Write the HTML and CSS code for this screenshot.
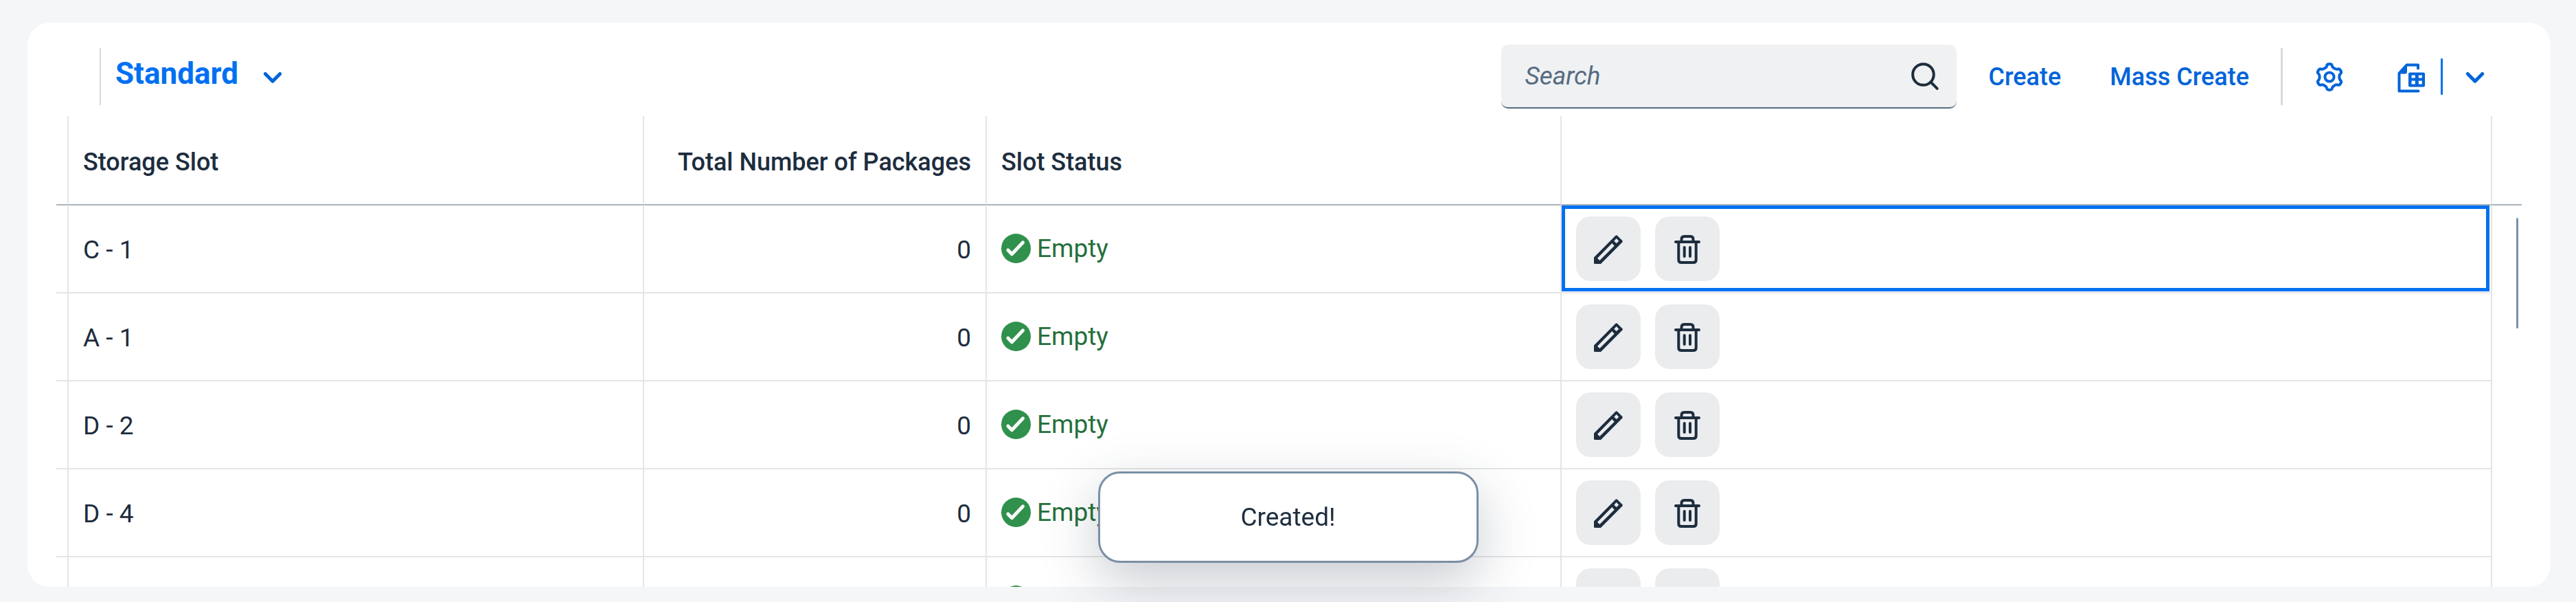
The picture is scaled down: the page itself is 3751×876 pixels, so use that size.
FILE: index.html
```html
<!DOCTYPE html>
<html lang="en">
<head>
<meta charset="utf-8">
<title>Storage Slots</title>
<link rel="stylesheet" href="styles.css">
</head>
<body>
<svg class="sprite" aria-hidden="true">
  <symbol id="chevron" viewBox="0 0 48 48"><path class="line thick" d="M13.3 19.5 24 30.2 34.7 19.5"/></symbol>
  <symbol id="search" viewBox="0 0 48 48"><circle class="line" cx="21.5" cy="21.5" r="15.3"/><path class="line" d="m32.5 32.5 9.3 9.3"/></symbol>
  <symbol id="export" viewBox="0 0 48 48">
    <path class="line" d="M38 11.5V6.5H21.5L10.5 18.5V44.5H38.5"/>
    <path d="M10 18 22 6V16.5Q22 19.5 19 19.5H10Z"/>
    <path fill-rule="evenodd" d="M26 17.5H46Q48 17.5 48 19.5V36.5Q48 38.5 46 38.5H26Q24 38.5 24 36.5V19.5Q24 17.5 26 17.5ZM28.5 21.5V25.5H33.8V21.5ZM38.8 21.5V25.5H43.8V21.5ZM28.5 29.5V34.5H33.8V29.5ZM38.8 29.5V34.5H43.8V29.5Z"/>
  </symbol>
  <symbol id="edit" viewBox="0 0 48 48">
    <path fill-rule="evenodd" d="M3 36.5 34.5 4.7Q35.7 3.6 36.9 4.7L44.3 12Q45.5 13.2 44.3 14.4L13 46H4.5Q3 46 3 44.5ZM8 37.7 11.3 41 32.7 19.7 29.3 16ZM35.7 9 32.3 12.7 35.7 16 39.3 12.7Z"/>
  </symbol>
  <symbol id="delete" viewBox="0 0 48 48">
    <path class="line" d="M7 14H41M15.5 14V10Q15.5 6 19.5 6H28.5Q32.5 6 32.5 10V14M11.3 14V40Q11.3 44 15.3 44H32.7Q36.7 44 36.7 40V14M19.7 22V35M28 22V35"/>
  </symbol>
  <symbol id="success" viewBox="0 0 43 43"><circle cx="21.5" cy="21.5" r="21.5"/><path class="tick" d="M9.8 24 15.4 29.7 31.4 12.9"/></symbol>
</svg>

<main class="card">
  <div class="toolbar">
    <span class="separator separator-thin"></span>
    <h2 class="view-title">Standard</h2>
    <button class="view-menu" type="button" aria-label="Select view"><svg class="icon"><use href="#chevron"/></svg></button>
    <div class="actions">
      <div class="search">
        <input class="search-input" type="text" placeholder="Search" aria-label="Search">
        <button class="search-button" type="button" aria-label="Run search"><svg class="icon"><use href="#search"/></svg></button>
      </div>
      <button class="text-button" type="button">Create</button>
      <button class="text-button" type="button">Mass Create</button>
      <span class="separator"></span>
      <button class="icon-button" type="button" aria-label="Settings">
        <svg class="icon" viewBox="-24 -24 48 48">
          <circle class="line" r="6.6"/>
          <g id="gear-part"><path class="line" d="M0-18.7H1Q3.4-18.7 3.7-16.8C4-13.5 9.7-10.2 12.7-11.6Q14.5-12.3 15.7-10.2L16.2-9.4"/></g>
          <use href="#gear-part" transform="rotate(60)"/>
          <use href="#gear-part" transform="rotate(120)"/>
          <use href="#gear-part" transform="rotate(180)"/>
          <use href="#gear-part" transform="rotate(240)"/>
          <use href="#gear-part" transform="rotate(300)"/>
        </svg>
      </button>
      <div class="split">
        <button class="icon-button" type="button" aria-label="Export"><svg class="icon"><use href="#export"/></svg></button>
        <span class="split-line"></span>
        <button class="icon-button" type="button" aria-label="Export options"><svg class="icon"><use href="#chevron"/></svg></button>
      </div>
    </div>
  </div>

  <table class="slots">
    <colgroup><col class="col-gutter"><col class="col-slot"><col class="col-count"><col class="col-status"><col><col class="col-scroll"></colgroup>
    <thead>
      <tr><th></th><th>Storage Slot</th><th class="number">Total Number of Packages</th><th>Slot Status</th><th></th><th></th></tr>
    </thead>
    <tbody>
      <tr>
        <td></td><td>C - 1</td><td class="number">0</td>
        <td><span class="status"><svg class="status-icon"><use href="#success"/></svg>Empty</span></td>
        <td class="tools focused"><div class="row-actions"><button class="row-button" type="button" aria-label="Edit"><svg class="icon"><use href="#edit"/></svg></button><button class="row-button" type="button" aria-label="Delete"><svg class="icon"><use href="#delete"/></svg></button></div></td>
        <td class="scroll" rowspan="5"><div class="thumb"></div></td>
      </tr>
      <tr>
        <td></td><td>A - 1</td><td class="number">0</td>
        <td><span class="status"><svg class="status-icon"><use href="#success"/></svg>Empty</span></td>
        <td class="tools"><div class="row-actions"><button class="row-button" type="button" aria-label="Edit"><svg class="icon"><use href="#edit"/></svg></button><button class="row-button" type="button" aria-label="Delete"><svg class="icon"><use href="#delete"/></svg></button></div></td>
      </tr>
      <tr>
        <td></td><td>D - 2</td><td class="number">0</td>
        <td><span class="status"><svg class="status-icon"><use href="#success"/></svg>Empty</span></td>
        <td class="tools"><div class="row-actions"><button class="row-button" type="button" aria-label="Edit"><svg class="icon"><use href="#edit"/></svg></button><button class="row-button" type="button" aria-label="Delete"><svg class="icon"><use href="#delete"/></svg></button></div></td>
      </tr>
      <tr>
        <td></td><td>D - 4</td><td class="number">0</td>
        <td><span class="status"><svg class="status-icon"><use href="#success"/></svg>Empty</span></td>
        <td class="tools"><div class="row-actions"><button class="row-button" type="button" aria-label="Edit"><svg class="icon"><use href="#edit"/></svg></button><button class="row-button" type="button" aria-label="Delete"><svg class="icon"><use href="#delete"/></svg></button></div></td>
      </tr>
      <tr>
        <td></td><td></td><td class="number"></td>
        <td><span class="status"><svg class="status-icon"><use href="#success"/></svg></span></td>
        <td class="tools"><div class="row-actions"><button class="row-button" type="button" aria-label="Edit"><svg class="icon"><use href="#edit"/></svg></button><button class="row-button" type="button" aria-label="Delete"><svg class="icon"><use href="#delete"/></svg></button></div></td>
      </tr>
    </tbody>
  </table>
</main>

<div class="toast" role="status">Created!</div>
</body>
</html>
```
FILE: styles.css
```css
* {
  box-sizing: border-box;
}

html {
  height: 100%;
  overflow: hidden;
}

body {
  display: flex;
  height: 100%;
  margin: 0;
  padding: 33px 37px 22px 40px;
  overflow: hidden;
  background: #f5f6f8;
  color: #1d2d3e;
  font: 37px Roboto, "Liberation Sans", sans-serif;
}

button {
  display: flex;
  flex: none;
  align-items: center;
  justify-content: center;
  margin: 0;
  padding: 0;
  border: 0;
  background: none;
  color: #0064d9;
  font: inherit;
}

.sprite {
  position: absolute;
  width: 0;
  height: 0;
}

.icon {
  display: block;
  width: 48px;
  height: 48px;
  fill: currentColor;
}

.line {
  fill: none;
  stroke: currentColor;
  stroke-width: 4;
  stroke-linecap: round;
  stroke-linejoin: round;
}

.thick {
  stroke-width: 5;
}

.card {
  flex: 1;
  min-width: 0;
  overflow: hidden;
  padding: 0 42px;
  border-radius: 32px;
  background: #fff;
}

.toolbar {
  display: flex;
  align-items: center;
  padding: 32px 21px 11px 63px;
}

.separator {
  flex: none;
  width: 3px;
  height: 83px;
  background: #d9d9d9;
}

.separator-thin {
  width: 2px;
}

.view-title {
  margin: 0;
  padding: 0 26px 10px 21px;
  color: #0070f2;
  font-size: 44px;
  font-weight: 700;
}

.actions {
  display: flex;
  align-items: center;
  gap: 21px;
  margin-left: auto;
}

.search {
  display: flex;
  align-items: center;
  width: 663px;
  height: 93px;
  padding: 0 22px 0 34px;
  overflow: hidden;
  border-bottom: 2px solid #556b82;
  border-radius: 10px;
  background: #eff1f2;
}

.search-input {
  flex: 1;
  min-width: 0;
  padding: 0;
  border: 0;
  outline: 0;
  background: none;
  color: #1d2d3e;
  font: inherit;
}

.search-input::placeholder {
  color: #556b82;
  font-style: italic;
  opacity: 1;
}

.search-button {
  color: #1d2d3e;
}

.text-button {
  height: 93px;
  padding: 0 25px;
  font-size: 36px;
  font-weight: 500;
}

.icon-button {
  width: 94px;
  height: 93px;
}

.split {
  display: flex;
  align-items: center;
}

.split-line {
  width: 3px;
  height: 53px;
  border-radius: 1px;
  background: #0070f2;
}

.slots {
  width: 100%;
  border-spacing: 0;
  table-layout: fixed;
}

.col-gutter {
  width: 18px;
}

.col-slot {
  width: 838px;
}

.col-count {
  width: 499px;
}

.col-status {
  width: 837px;
}

.col-scroll {
  width: 43px;
}

.slots th,
.slots td {
  height: 128px;
  padding: 3px 21px 0;
  border-right: 2px solid #e5e5e5;
  border-bottom: 2px solid #e5e5e5;
  text-align: left;
  vertical-align: middle;
}

.slots th {
  height: 130px;
  padding-top: 6px;
  border-bottom-color: #a8b3bd;
  font-size: 36px;
  font-weight: 500;
}

.slots th:first-child,
.slots td:first-child {
  padding: 0;
}

.slots th:last-child {
  padding: 0;
  border-right: 0;
}

.slots .number {
  text-align: right;
}

.slots .tools {
  padding: 0 21px;
}

.slots .focused {
  position: relative;
}

.focused::after {
  content: "";
  position: absolute;
  inset: 0 2px 1px 0;
  border: 5px solid #0070f2;
  pointer-events: none;
}

.slots .scroll {
  padding: 18px 5px 0 0;
  border: 0;
  vertical-align: top;
}

.thumb {
  width: 3px;
  height: 161px;
  margin-left: auto;
  border-radius: 2px;
  background: #7b91a8;
}

.status {
  display: flex;
  align-items: center;
  gap: 9px;
  padding-bottom: 4px;
  color: #256f3a;
}

.status-icon {
  width: 43px;
  height: 43px;
  fill: #30914c;
}

.tick {
  fill: none;
  stroke: #fff;
  stroke-width: 5;
  stroke-linecap: round;
  stroke-linejoin: round;
}

.row-actions {
  display: flex;
  gap: 21px;
}

.row-button {
  width: 94px;
  height: 94px;
  border-radius: 21px;
  background: #eaecee;
  color: #1d2d3e;
}

.toast {
  position: fixed;
  right: 0;
  bottom: 57px;
  left: 0;
  display: flex;
  align-items: center;
  justify-content: center;
  width: 554px;
  height: 133px;
  margin: 0 auto;
  border: 3px solid #7b8fa5;
  border-radius: 32px;
  background: #fff;
  box-shadow: 0 27px 80px rgba(34, 53, 72, 0.25);
}
```
